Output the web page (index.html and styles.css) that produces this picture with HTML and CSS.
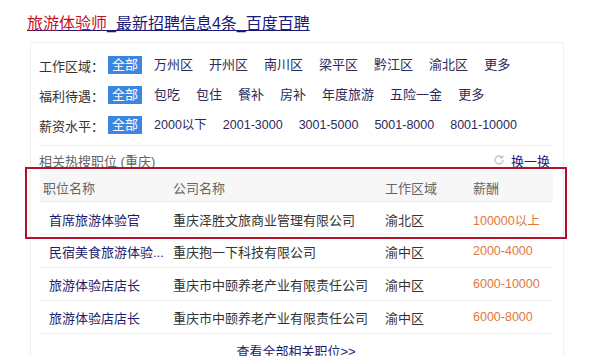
FILE: index.html
```html
<!DOCTYPE html>
<html lang="zh-CN">
<head>
    <meta charset="UTF-8">
    <meta name="viewport" content="width=device-width, initial-scale=1.0">
    <title>旅游体验师_最新招聘信息4条_百度百聘</title>
    <link rel="stylesheet" href="styles.css">
</head>
<body>
    <div class="page">
        <h3 class="title"><a href="#"><em>旅游体验师</em>_最新招聘信息4条_百度百聘</a></h3>

        <div class="card">
            <div class="filter">
                <span class="label">工作区域：</span>
                <a class="item active" href="#">全部</a>
                <a class="item" href="#">万州区</a>
                <a class="item" href="#">开州区</a>
                <a class="item" href="#">南川区</a>
                <a class="item" href="#">梁平区</a>
                <a class="item" href="#">黔江区</a>
                <a class="item" href="#">渝北区</a>
                <a class="item" href="#">更多</a>
            </div>
            <div class="filter">
                <span class="label">福利待遇：</span>
                <a class="item active" href="#">全部</a>
                <a class="item" href="#">包吃</a>
                <a class="item" href="#">包住</a>
                <a class="item" href="#">餐补</a>
                <a class="item" href="#">房补</a>
                <a class="item" href="#">年度旅游</a>
                <a class="item" href="#">五险一金</a>
                <a class="item" href="#">更多</a>
            </div>
            <div class="filter salary">
                <span class="label">薪资水平：</span>
                <a class="item active" href="#">全部</a>
                <a class="item" href="#">2000以下</a>
                <a class="item" href="#">2001-3000</a>
                <a class="item" href="#">3001-5000</a>
                <a class="item" href="#">5001-8000</a>
                <a class="item" href="#">8001-10000</a>
            </div>

            <div class="hot">
                <span>相关热搜职位 (重庆)</span>
                <a class="refresh" href="#">
                    <svg width="12" height="12" viewBox="0 0 12 12"><path d="M10 6a4 4 0 1 1-1.2-2.85" fill="none" stroke="#c8c8c8" stroke-width="1.4"/><path d="M9.6 1.2v2.6H7" fill="none" stroke="#c8c8c8" stroke-width="1.4"/></svg>
                    换一换
                </a>
            </div>

            <div class="jobs">
                <div class="row head">
                    <span class="job">职位名称</span>
                    <span>公司名称</span>
                    <span>工作区域</span>
                    <span>薪酬</span>
                </div>
                <div class="row first">
                    <a class="job" href="#">首席旅游体验官</a>
                    <span>重庆泽胜文旅商业管理有限公司</span>
                    <span>渝北区</span>
                    <span class="pay">100000以上</span>
                </div>
                <div class="row">
                    <a class="job" href="#">民宿美食旅游体验...</a>
                    <span>重庆抱一下科技有限公司</span>
                    <span>渝中区</span>
                    <span class="pay">2000-4000</span>
                </div>
                <div class="row">
                    <a class="job" href="#">旅游体验店店长</a>
                    <span>重庆市中颐养老产业有限责任公司</span>
                    <span>渝中区</span>
                    <span class="pay">6000-10000</span>
                </div>
                <div class="row">
                    <a class="job" href="#">旅游体验店店长</a>
                    <span>重庆市中颐养老产业有限责任公司</span>
                    <span>渝中区</span>
                    <span class="pay">6000-8000</span>
                </div>
            </div>

            <a class="more" href="#">查看全部相关职位&gt;&gt;</a>
        </div>

        <div class="mark"></div>
    </div>
</body>
</html>
```

FILE: styles.css
```css
body {
    margin: 0;
    background: #fff;
    font-family: "Liberation Sans", "Noto Sans CJK SC", sans-serif;
    font-size: 13px;
    color: #333;
}
a {
    text-decoration: none;
}
.page {
    position: relative;
    padding: 13px 0 0 27px;
}
.title {
    margin: 0;
    font-size: 16px;
    font-weight: normal;
    line-height: 22px;
}
.title a {
    color: #1a1a78;
    text-decoration: underline;
}
.title em {
    font-style: normal;
    color: #c4121f;
}
.card {
    width: 514px;
    margin: 7px 0 0 3px;
    padding: 7px 10px 0 8px;
    border: 1px solid #f0f0f0;
}
.filter {
    display: flex;
    align-items: center;
    gap: 8px;
    height: 30px;
}
.label {
    color: #333;
    margin-right: -4px;
}
.item {
    padding: 0 4px;
    line-height: 18px;
    color: #2a2a5c;
}
.item.active {
    background: #3a86e0;
    color: #fff;
}
.salary .item {
    font-size: 12.5px;
}
.salary .item.active {
    font-size: 13px;
}
.hot {
    display: flex;
    justify-content: space-between;
    align-items: center;
    height: 20px;
    margin-top: 5px;
    padding-top: 4px;
    border-top: 1px solid #efefef;
    color: #666;
}
.refresh {
    display: flex;
    align-items: center;
    gap: 6px;
    margin-right: 3px;
    color: #1c1c80;
}
.jobs {
    margin: 0 0 0 1px;
}
.row {
    display: grid;
    grid-template-columns: 133px 212px 88px 1fr;
    align-items: center;
    height: 32px;
    border-bottom: 1px solid #eee;
}
.row .job {
    padding-left: 9px;
    color: #1c1c6e;
}
.row.head {
    height: 28px;
    padding-top: 3px;
    background: #f7f7f7;
    color: #666;
}
.row.head .job {
    padding-left: 3px;
    color: #666;
}
.row.first {
    height: 30px;
    padding-top: 2px;
}
.pay {
    color: #e2773c;
    font-size: 12.5px;
}
.more {
    display: block;
    margin-top: 8px;
    text-align: center;
    color: #1c1c6e;
    line-height: 20px;
}
.mark {
    position: absolute;
    left: 25px;
    top: 167px;
    width: 538px;
    height: 68px;
    border: 2px solid #b5112b;
}
```
